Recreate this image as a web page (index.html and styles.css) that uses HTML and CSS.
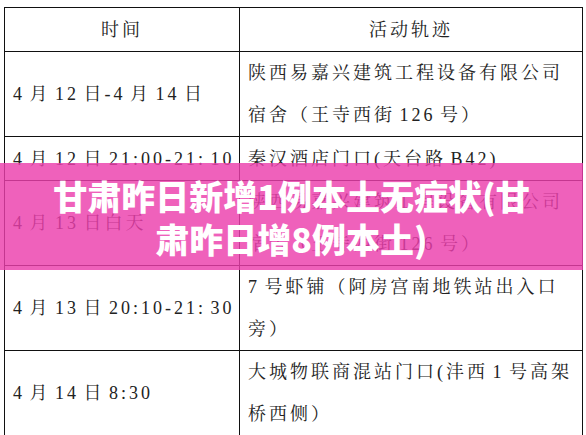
FILE: index.html
```html
<!DOCTYPE html>
<html lang="zh-CN">
<head>
<meta charset="utf-8">
<title>活动轨迹</title>
<link rel="stylesheet" href="styles.css">
</head>
<body>
<div class="page">
  <table class="trace">
    <colgroup><col class="c-time"><col class="c-place"></colgroup>
    <tr class="r-head">
      <th>时间</th>
      <th>活动轨迹</th>
    </tr>
    <tr class="r-double">
      <td>4 月 12 日-4 月 14 日</td>
      <td>陕西易嘉兴建筑工程设备有限公司<br>宿舍（王寺西街 126 号）</td>
    </tr>
    <tr class="r-single">
      <td>4 月 12 日 21:00-21: 10</td>
      <td>秦汉酒店门口(天台路 B42)</td>
    </tr>
    <tr class="r-double">
      <td>4 月 13 日白天</td>
      <td>陕西易嘉兴建筑工程设备有限公司<br>宿舍（王寺西街 126 号）</td>
    </tr>
    <tr class="r-double">
      <td>4 月 13 日 20:10-21: 30</td>
      <td>7 号虾铺（阿房宫南地铁站出入口<br>旁）</td>
    </tr>
    <tr class="r-double">
      <td>4 月 14 日 8:30</td>
      <td>大城物联商混站门口(沣西 1 号高架<br>桥西侧）</td>
    </tr>
  </table>
  <div class="banner">
    <p class="banner-title">甘肃昨日新增1例本土无症状(甘<br>肃昨日增8例本土)</p>
  </div>
</div>
</body>
</html>
```
FILE: styles.css
```css
html, body {
  margin: 0;
  padding: 0;
  background: #ffffff;
}
.page {
  position: relative;
  width: 586px;
  height: 435px;
  overflow: hidden;
  padding: 7px 0 0 4px;
  box-sizing: border-box;
}
.trace {
  border-collapse: collapse;
  width: 578px;
  table-layout: fixed;
  font-family: "Liberation Serif", "Noto Serif CJK SC", "Noto Sans CJK SC", serif;
  font-size: 18px;
  color: #222222;
  letter-spacing: 3px;
  word-spacing: -3px;
}
.c-time { width: 235px; }
.c-place { width: 343px; }
.trace th, .trace td {
  border: 1px solid #111111;
  padding: 0 0 0 8px;
  vertical-align: middle;
  white-space: nowrap;
  font-weight: normal;
  line-height: 42px;
}
.trace th {
  text-align: center;
  padding: 0;
}
.r-head { height: 44px; }
.r-single { height: 44px; }
.r-double { height: 85px; }
.banner {
  position: absolute;
  left: 0;
  top: 163px;
  width: 583px;
  height: 107px;
  background: rgba(236, 62, 172, 0.82);
  display: flex;
  align-items: center;
  justify-content: center;
}
.banner-title {
  margin: 0;
  color: #ffffff;
  font-family: "Noto Sans CJK SC", "Noto Sans", sans-serif;
  font-weight: 900;
  font-size: 34px;
  line-height: 43px;
  text-align: center;
  letter-spacing: 0;
}
```
